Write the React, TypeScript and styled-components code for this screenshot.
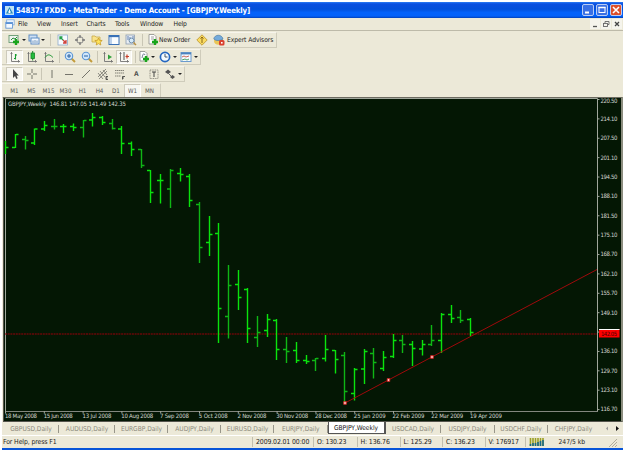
import React from "react";
import styled, { createGlobalStyle, css } from "styled-components";

const Global = createGlobalStyle`
  * { box-sizing: border-box; }
  body { margin: 0; background: #fff; font-family: "DejaVu Sans Condensed", "DejaVu Sans", sans-serif; font-size: 6.5px; color: #222; }
  svg { display: block; overflow: visible; }
`;

const Window = styled.div`
  width: 625px; height: 450px; padding: 2px 2px 0 2px; overflow: hidden;
  display: flex; flex-direction: column; background: #fff;
`;
const Body = styled.div`
  width: 621px; height: 446px; flex: none; display: flex; flex-direction: column; background: #ece9d8;
`;
const TitleBar = styled.header`
  height: 16px; display: flex; align-items: center; padding: 0 1px 0 3px; flex: none;
  background: linear-gradient(#2b7df5 0, #0a4fe0 12%, #0350da 45%, #0462fa 65%, #0462fa 88%, #0340b8 100%);
`;
const Title = styled.h1`
  margin: 0 auto 0 2px; color: #fff; white-space: pre;
  font: bold 7.8px "DejaVu Sans Condensed", "DejaVu Sans", sans-serif; letter-spacing: -0.15px;
`;
const WinButton = styled.span<{ $close?: boolean }>`
  width: 12px; height: 12px; margin-left: 2px; border: 1px solid #b9cdf5; border-radius: 2px;
  background: ${(p) => (p.$close ? "#dc4f2b" : "#3a70e4")};
`;
const MenuBar = styled.nav`
  height: 13px; display: flex; align-items: center; padding-left: 3px; border-bottom: 1px solid #bdbaa9; flex: none;
`;
const MenuItem = styled.span<{ $w: number }>`
  width: ${(p) => p.$w}px; white-space: nowrap; font-size: 6.7px; letter-spacing: -0.1px;
`;
const ChildButtons = styled.div`
  margin-left: auto; display: flex; gap: 1px; padding-right: 1px;
`;
const ChildButton = styled.span`
  width: 10px; height: 10px; background: #f5f4ec; color: #555;
`;
const Toolbars = styled.div`
  height: 66px; display: flex; flex-direction: column; align-items: flex-start; gap: 1px; padding-top: 1px; flex: none;
`;
const Toolbar = styled.div<{ $w: number; $h?: number }>`
  width: ${(p) => p.$w}px; height: ${(p) => p.$h ?? 16}px; display: flex; align-items: center; padding-left: 4px;
  border-right: 1px solid #cfccbb; border-bottom: 1px solid #cfccbb; border-top: 1px solid #f7f5ec;
`;
const Slot = styled.span<{ $w: number; $on?: boolean }>`
  width: ${(p) => p.$w}px; height: 14px; flex: none; display: flex; align-items: center; justify-content: center;
  white-space: nowrap;
  ${(p) => p.$on && css`background: #f8f7f1; border: 1px solid #cdcabb; border-right-color: #fff; border-bottom-color: #fff;`}
`;
const Label = styled.span<{ $w: number; $s?: number }>`
  width: ${(p) => p.$w}px; flex: none; white-space: nowrap; font-size: 6.7px; letter-spacing: ${(p) => p.$s ?? 0}px;
`;
const Rule = styled.span`
  width: 1px; height: 12px; background: #c9c6b5; flex: none;
`;
const Frames = styled.span`
  display: contents; font-size: 6.2px; color: #555;
`;
const Caret = styled.span`
  width: 0; height: 0; flex: none; border: 2px solid transparent; border-top-color: #222; border-bottom: 0; margin: 0 2px 0 1px;
`;
const ChartPane = styled.main`
  height: 325px; margin-left: 1px; width: 620px; flex: none; background: #041704;
  border-top: 1px solid #6c6b60; border-left: 1px solid #55554d; border-right: 2px solid #8b8d7e; border-bottom: 1px solid #55554d;
`;
const Tabs = styled.div`
  height: 14px; display: flex; align-items: stretch; padding-left: 1px; flex: none; color: #8b897c;
  border-bottom: 1px solid #fff;
`;
const Tab = styled.span<{ $w: number; $on?: boolean; $last?: boolean }>`
  width: ${(p) => p.$w}px; flex: none; display: flex; align-items: center; justify-content: center; white-space: nowrap;
  font-size: 6.6px; letter-spacing: -0.02px; position: relative;
  &::after { content: ""; width: ${(p) => (p.$on || p.$last ? 0 : 1)}px; height: 8px; background: #98968a; position: absolute; right: 0; }
  ${(p) => p.$on && css`height: 12px; color: #111; background: #fff; border: 1px solid #555; border-top: 0; border-right-width: 2px;`}
`;
const Arrows = styled.span`
  margin-left: auto; padding: 3px 4px 0 0;
`;
const Status = styled.footer`
  height: 12px; display: flex; align-items: center; padding-left: 1px; flex: none;
`;
const Cell = styled.span<{ $w: number; $first?: boolean }>`
  width: ${(p) => p.$w}px; height: 10px; flex: none; display: flex; align-items: center; white-space: nowrap;
  padding-left: ${(p) => (p.$first ? 0 : 3)}px; border-left: ${(p) => (p.$first ? 0 : 1)}px solid #c2bfaf;
  font-size: 6.9px; letter-spacing: -0.13px;
`;
const BottomEdge = styled.div`
  flex: 1; background: #0754d8; width: 621px;
`;

const Ico = ({ children, size = 12 }: { children: React.ReactNode; size?: number }) => (
  <svg width={size} height={size} viewBox="0 0 12 12" fill="none">{children}</svg>
);
const Plus = ({ x = 8, y = 8 }: { x?: number; y?: number }) => (
  <path d={`M${x - 3} ${y}h6M${x} ${y - 3}v6`} stroke="#19a51c" strokeWidth="2.4" />
);
const Page = ({ tint = "#fff" }: { tint?: string }) => (
  <path d="M2 .5h5l2 2v7.500H2z" fill={tint} stroke="#8c8c88" strokeWidth=".8" />
);
const NewChart = () => <Ico><rect x="1" y="1.500" width="9" height="7" fill="#eef5ee" stroke="#669970" strokeWidth=".9" /><path d="M3 6l2-2 2 1 2-2" stroke="#2d8b3c" /><Plus /></Ico>;
const Profiles = () => <Ico><rect x="1" y="1" width="8" height="6" fill="#cfe0f4" stroke="#5f8dc4" /><rect x="3" y="4" width="8" height="6" fill="#f3f8ff" stroke="#5f8dc4" /><path d="M5 9V6.500M7 9V6M9 9V6.500" stroke="#7599bd" /></Ico>;
const Market = () => <Ico><rect x="1" y="1" width="9.500" height="10" fill="#f7fbff" stroke="#8eaacb" strokeWidth=".8" /><path d="M3 3l3 3M3 5.500V3h2.500" stroke="#23a04a" strokeWidth="1.300" /><path d="M6 6l3 3M9 6v3H6" stroke="#d0423c" strokeWidth="1.300" /></Ico>;
const Target = () => <Ico><circle cx="6" cy="6" r="3.300" stroke="#888" /><path d="M6 1v3M6 8v3M1 6h3M8 6h3" stroke="#777" strokeWidth="1.300" /></Ico>;
const Navigator = () => <Ico><path d="M1 2h3l1 1h4v5H1z" fill="#f9e38a" stroke="#c9aa4a" strokeWidth=".8" /><path d="M7.500 4l1 2.300 2.700.2-2 1.800.6 2.700-2.300-1.400L5.200 11l.6-2.700-2-1.800 2.700-.2z" fill="#ffe45a" stroke="#c79b28" strokeWidth=".8" /></Ico>;
const Terminal = () => <Ico><rect x="1" y="1.500" width="10" height="9" fill="#fafdff" stroke="#3971b7" /><path d="M1 2.500h10" stroke="#3971b7" strokeWidth="1.300" /><path d="M3 3v7" stroke="#7fa5d6" /></Ico>;
const Tester = () => <Ico><rect x="1" y="1" width="8.500" height="9" fill="#e7edf3" stroke="#8c9caf" strokeWidth=".8" /><path d="M3 2v4M5 3v5M8 2v3" stroke="#6381b3" /><circle cx="6.500" cy="6.500" r="2.400" fill="#d5eaf8" stroke="#7491ae" /><path d="M8.500 8.500l2.500 2.500" stroke="#b99142" strokeWidth="1.500" /></Ico>;
const Order = () => <Ico><Page /><path d="M4 3h3M4 5h3" stroke="#888" strokeWidth=".8" /><Plus /></Ico>;
const Editor = () => <Ico><path d="M6 .8L11.200 6 6 11.200.8 6z" fill="#fadb62" stroke="#b9932c" strokeWidth=".8" /><path d="M6 3v6M4.500 4.500L6 3l1.500 1.500" stroke="#8a6815" /></Ico>;
const Expert = () => <Ico><ellipse cx="5.500" cy="7" rx="4.500" ry="3.800" fill="#e9c558" /><path d="M.8 5C1.500 0 9 0 10 5 7 7 3 7 .8 5z" fill="#75abdb" stroke="#4e7ba5" strokeWidth=".7" /><rect x="6" y="6" width="5.500" height="5.500" rx="1.500" fill="#d9412e" /><rect x="8" y="8" width="1.600" height="1.600" fill="#fff" /></Ico>;
const Axes = () => <path d="M2.500 1v9.500H11M1.500 2.500h2M9.500 9v2.500" stroke="#747474" strokeWidth=".9" />;
const BarIcon = () => <Ico><Axes /><path d="M6.500 3v5.500M5 7.500h1.500M6.500 4H8" stroke="#139b2d" strokeWidth="1.100" /></Ico>;
const CandleIcon = () => <Ico><Axes /><rect x="5" y="2" width="3.500" height="5.500" fill="#24bc3c" stroke="#148425" strokeWidth=".8" /><path d="M6.700 0v2M6.700 7.500v2" stroke="#148425" /></Ico>;
const LineIcon = () => <Ico><Axes /><path d="M2 6.500c3-4 5-3 8 0" stroke="#2a9b3a" /></Ico>;
const Zoom = ({ plus }: { plus?: boolean }) => <Ico><path d="M7.500 7.500l3.500 3.500" stroke="#c39b3b" strokeWidth="2" /><circle cx="5" cy="5" r="3.700" fill="#cfe6fb" stroke="#5a94d3" strokeWidth="1.100" /><path d={plus ? "M3 5h4M5 3v4" : "M3 5h4"} stroke="#285f9e" /></Ico>;
const ScrollIcon = () => <Ico><Axes /><path d="M6 3.500l4 2.500-4 2.500z" fill="#31a13c" /></Ico>;
const ShiftIcon = () => <Ico><Axes /><path d="M6 1v8" stroke="#555" /><path d="M11 5.500H7.500M9 3.500v4" stroke="#c83d29" strokeWidth="1.200" /></Ico>;
const Indicators = () => <Ico><Page /><path d="M4 7c1-5 2-5 3-3" stroke="#567" strokeWidth=".8" /><Plus /></Ico>;
const Clock = () => <Ico><circle cx="6" cy="6" r="4.600" fill="#f4faff" stroke="#2567c0" strokeWidth="1.700" /><path d="M6 3v3h2.500" stroke="#456" /></Ico>;
const Template = () => <Ico><rect x="1" y="1.500" width="10" height="9" fill="#f5faff" stroke="#6c9bce" /><path d="M1 2.500h10" stroke="#4b83be" strokeWidth="1.800" /><path d="M2 6l2-1 2 1 3-1" stroke="#c65745" strokeWidth=".9" /><path d="M2 9l3-1 2 1 2-1" stroke="#3a9b52" strokeWidth=".9" /></Ico>;
const Pointer = () => <Ico><path d="M4 1v9l2-2 1.300 3 1.400-.7L7.500 7.500h2.300z" fill="#444" /></Ico>;
const Stroke = ({ d }: { d: string }) => <Ico><path d={d} stroke="#68675f" strokeWidth=".9" /></Ico>;
const Channel = () => <Ico><path d="M1 9l8-8M2 11l8-8M3 3l5 6M1 5l5 6M6 2l4 5" stroke="#66655f" strokeWidth=".7" /><path d="M11 8.500H9v3h2M9 10h1.500" stroke="#333" strokeWidth=".8" /></Ico>;
const Fibo = () => <Ico><path d="M1 2.500h9M1 5h9M1 8h6" stroke="#77756c" strokeWidth=".9" strokeDasharray="1.500 .5" /><path d="M8.500 11.500V8.500h2.500M8.500 10H10" stroke="#333" strokeWidth=".8" /></Ico>;
const TextBox = () => <Ico><rect x="2" y="2" width="8" height="8.500" stroke="#77756c" strokeWidth=".8" strokeDasharray="1 .7" /><path d="M4 4h4M6 4v5" stroke="#444" /></Ico>;
const Shapes = () => <Ico><path d="M1 4l3-2.500L7 4 4 6z" fill="#555" /><path d="M4 5l3 3" stroke="#666" /><path d="M6 9l2.500-2L11 9l-2.500 2z" fill="#555" /></Ico>;

// Each row holds x, open, high, low and close in pane coordinates.
const bars: number[][] = [
  [5, 147.5, 141, 154, 147.5], [15, 147.5, 134, 148, 134.5], [25, 139.5, 136, 149.5, 140.5], [34, 143, 128.5, 145, 129],
  [44, 129, 121, 131, 125.5], [54, 126.5, 119, 129.5, 126.5], [63, 126.5, 124, 133, 126.5], [73, 126.5, 123.5, 131, 127.5],
  [83, 127.5, 120, 137.5, 120.5], [92, 120, 113, 126.5, 117.5], [102, 117.5, 116, 125, 122.5], [112, 123.5, 119, 129.5, 128.5],
  [121, 129, 126, 154, 143.5], [131, 143.5, 141.5, 156, 149.5], [141, 149.5, 149, 168, 165.5], [150, 170.5, 170, 203, 192.5],
  [160, 180.5, 174, 203.5, 180.5], [170, 189, 169, 208, 170.5], [180, 173.5, 168, 181.5, 174.5], [189, 176.5, 174, 207, 200.5],
  [199, 204.5, 202, 263, 247.5], [209, 242.5, 216, 256, 234.5], [218, 233.5, 223, 343, 308.5], [228, 316.5, 265, 338.5, 285.5],
  [238, 284.5, 270, 310, 297.5], [247, 289.5, 288, 343, 328.5], [257, 337.5, 316, 347, 332.5], [267, 330.5, 314, 337, 319.5],
  [276, 320.5, 319, 360, 349.5], [286, 349.5, 337, 363, 351.5], [296, 350.5, 342, 363, 360.5], [306, 360.5, 355, 364, 361.5],
  [315, 360.5, 358, 371, 358.5], [325, 358.5, 335, 361.5, 349.5], [335, 350.5, 350, 373.5, 359.5], [344, 355.5, 352, 403, 391.5],
  [354, 393.5, 368, 400.5, 369.5], [364, 369, 349, 384, 351.5], [373, 353.5, 348, 378.5, 362.5], [383, 368.5, 351, 371, 357.5],
  [393, 356.5, 334, 358, 340.5], [402, 340.5, 335, 353, 344.5], [412, 344.5, 341, 366, 348.5], [422, 349, 340, 355.5, 344.5],
  [431, 344.5, 325, 346, 340.5], [441, 340.5, 313, 353, 314.5], [451, 314.5, 305, 323, 318.5], [460, 317.5, 310, 323, 320.5],
  [470, 319.5, 318, 336, 332.5],
];
const prices = ["220.50", "214.10", "207.50", "201.10", "194.50", "188.10", "181.50", "175.10", "168.70", "162.10", "155.70", "149.10", "", "136.10", "129.70", "123.10", "116.70"];
const dates = ["18 May 2008", "15 Jun 2008", "13 Jul 2008", "10 Aug 2008", "7 Sep 2008", "5 Oct 2008", "2 Nov 2008", "30 Nov 2008", "28 Dec 2008", "25 Jan 2009", "22 Feb 2009", "22 Mar 2009", "19 Apr 2009"];

const PlotText = styled.text`
  font: 6px "DejaVu Sans Condensed", "DejaVu Sans", sans-serif; fill: #d2d6d0;
`;

const Chart = () => (
  <svg width="617" height="323" viewBox="4 98 617 323" fill="none">
    <path d="M5.500 411V98.500H597.500V411.500" stroke="#a0a79c" />
    <path d="M5 411.500H598" stroke="#83877f" />
    <path d="M5 334H597" stroke="#98000a" strokeWidth="1.200" strokeDasharray="2 .7" />
    {bars.map(([x, o, h, l, c], i) => (
      <path key={i} d={`M${x + 0.5} ${h}V${l}M${i ? x - 3 : x} ${o}H${x}M${x + 1} ${c}h2.500`} stroke={i % 3 === 2 ? "#0fb615" : "#0ae30d"} strokeWidth="1.400" />
    ))}
    <path d="M345 403L597 269.500" stroke="#b0080c" strokeWidth=".9" />
    {[[345, 403], [388.5, 380], [432, 357]].map(([x, y]) => (
      <rect key={x} x={x - 1.2} y={y - 1.2} width="2.400" height="2.400" fill="#fff" stroke="#e22" strokeWidth=".9" />
    ))}
    <PlotText x="8" y="105.500" textLength="118" xmlSpace="preserve">GBPJPY,Weekly  146.81 147.05 141.49 142.35</PlotText>
    {prices.map((p, i) => (
      <g key={i}>
        <path d={`M598 ${99.5 + i * 19.38}h1.500`} stroke="#a0a79c" />
        {p && <PlotText x="600.500" y={i ? 101.4 + i * 19.38 : 102.6} textLength="17">{p}</PlotText>}
      </g>
    ))}
    <rect x="599" y="329" width="20.500" height="8.500" fill="#f00" />
    <path d="M599 329.500h20.500" stroke="#fff" />
    <text x="601" y="335.800" textLength="16" fontSize="5.800" fill="#400">142.05</text>
    {dates.map((d, i) => (
      <g key={d}>
        <path d={`M${5.5 + i * 38.8} 411v2.500`} stroke="#a0a79c" />
        <PlotText x={5 + i * 38.75} y="418.400" textLength={d.length === 11 ? (i === 1 || i === 2 ? 29 : 32) : 29}>{d}</PlotText>
      </g>
    ))}
  </svg>
);

const tabs: [string, number][] = [["GBPUSD,Daily", 56], ["AUDUSD,Daily", 56], ["EURGBP,Daily", 53], ["AUDJPY,Daily", 53], ["EURUSD,Daily", 53], ["EURJPY,Daily", 53.5], ["GBPJPY,Weekly", 58], ["USDCAD,Daily", 55], ["USDJPY,Daily", 54], ["USDCHF,Daily", 53], ["CHFJPY,Daily", 52]];
const menus: [string, number][] = [["File", 19], ["View", 24], ["Insert", 25.5], ["Charts", 28.5], ["Tools", 25], ["Window", 33.5], ["Help", 20]];
const periods: [string, number][] = [["M1", 17], ["M5", 17], ["M15", 17], ["M30", 17], ["H1", 17], ["H4", 17], ["D1", 16], ["W1", 17], ["MN", 17]];

export default function App() {
  return (
    <Window>
      <Global />
      <Body>
        <TitleBar>
          <svg width="9" height="9" viewBox="0 0 9 9"><rect width="9" height="9" fill="#bfe2f4" /><path d="M4.500 1L8 7.500H1z" fill="#2688bd" /><path d="M4.500 3.500V7M3 6h3" stroke="#fff" /></svg>
          <Title>54837: FXDD - MetaTrader - Demo Account - [GBPJPY,Weekly]</Title>
          <WinButton><svg width="10" height="10"><path d="M2 7.500h4" stroke="#fff" strokeWidth="2" /></svg></WinButton>
          <WinButton><svg width="10" height="10" fill="none"><rect x="2" y="2.500" width="6" height="5" stroke="#fff" /><path d="M1.500 2.500h7" stroke="#fff" strokeWidth="1.500" /></svg></WinButton>
          <WinButton $close><svg width="10" height="10"><path d="M2 2l6 6M8 2L2 8" stroke="#fff" strokeWidth="1.600" /></svg></WinButton>
        </TitleBar>
        <MenuBar>
          <Label $w={13}><svg width="10" height="10" viewBox="0 0 12 12" fill="none"><rect x="2" y="1" width="9" height="6" fill="#f5faff" stroke="#7ba9df" /><rect x="1" y="4" width="8" height="7" fill="#f5faff" stroke="#5a91d5" /><path d="M1 5h8" stroke="#5a91d5" strokeWidth="2" /></svg></Label>
          {menus.map(([m, w]) => <MenuItem key={m} $w={w}>{m}</MenuItem>)}
          <ChildButtons>
            <ChildButton><svg width="10" height="10"><path d="M3 7.500h4" stroke="#555" strokeWidth="1.300" /></svg></ChildButton>
            <ChildButton><svg width="10" height="10" fill="none" stroke="#666" strokeWidth=".9"><rect x="2.500" y="4.500" width="4" height="3" /><path d="M4 4V2.500h4v3H7" /></svg></ChildButton>
            <ChildButton><svg width="10" height="10"><path d="M3 3l4 4M7 3L3 7" stroke="#444" strokeWidth="1.300" /></svg></ChildButton>
          </ChildButtons>
        </MenuBar>
        <Toolbars>
          <Toolbar $w={275}>
            <Slot $w={15}><NewChart /></Slot><Caret /><Slot $w={12}><Profiles /></Slot><Caret />
            <Slot $w={7}><Rule /></Slot>
            <Slot $w={17}><Market /></Slot><Slot $w={17}><Target /></Slot><Slot $w={17}><Navigator /></Slot><Slot $w={17}><Terminal /></Slot><Slot $w={17}><Tester /></Slot>
            <Slot $w={7}><Rule /></Slot>
            <Slot $w={13}><Order /></Slot><Label $w={35} $s={-0.12}>New Order</Label><Slot $w={16}><Editor /></Slot><Slot $w={17}><Expert /></Slot><Label $w={47} $s={-0.05}>Expert Advisors</Label>
          </Toolbar>
          <Toolbar $w={199}>
            <Slot $w={17} $on><BarIcon /></Slot><Slot $w={17}><CandleIcon /></Slot><Slot $w={17}><LineIcon /></Slot><Slot $w={4}><Rule /></Slot>
            <Slot $w={17}><Zoom plus /></Slot><Slot $w={17}><Zoom /></Slot><Slot $w={4}><Rule /></Slot>
            <Slot $w={17}><ScrollIcon /></Slot><Slot $w={16} $on><ShiftIcon /></Slot><Slot $w={6}><Rule /></Slot>
            <Slot $w={12}><Indicators /></Slot><Caret /><Slot $w={15}><Clock /></Slot><Caret /><Slot $w={14}><Template /></Slot><Caret />
          </Toolbar>
          <Toolbar $w={183}>
            <Slot $w={17} $on><Pointer /></Slot><Slot $w={17}><Stroke d="M6 1v4M6 7v4M1 6h4M7 6h4" /></Slot><Slot $w={3}><Rule /></Slot>
            <Slot $w={17}><Stroke d="M6 2v8" /></Slot><Slot $w={17}><Stroke d="M2 6.500h8" /></Slot><Slot $w={17}><Stroke d="M2 10l8-8" /></Slot>
            <Slot $w={17}><Channel /></Slot><Slot $w={17}><Fibo /></Slot><Frames><Slot $w={17}><Label as="b" $w={5}>A</Label></Slot></Frames><Slot $w={17}><TextBox /></Slot><Slot $w={15}><Shapes /></Slot><Caret />
          </Toolbar>
          <Toolbar $w={159} $h={15}>
            <Frames>{periods.map(([p, w]) => <Slot key={p} $w={w} $on={p === "W1"}>{p}</Slot>)}</Frames>
          </Toolbar>
        </Toolbars>
        <ChartPane><Chart /></ChartPane>
        <Tabs>
          {tabs.map(([t, w]) => <Tab key={t} $w={w} $on={t === "GBPJPY,Weekly"} $last={t === "CHFJPY,Daily"}>{t}</Tab>)}
          <Arrows><svg width="16" height="7"><path d="M5 1.500v4L3 3.500z" fill="#999" /><path d="M13 1v5l3-2.500z" fill="#111" /></svg></Arrows>
        </Tabs>
        <Status>
          <Cell $w={249} $first>For Help, press F1</Cell>
          <Cell $w={61}>2009.02.01 00:00</Cell><Cell $w={43.5}>O: 130.23</Cell><Cell $w={43}>H: 136.76</Cell><Cell $w={42.5}>L: 125.29</Cell><Cell $w={42.5}>C: 136.23</Cell><Cell $w={40}>V: 176917</Cell>
          <Cell $w={34}><svg width="16" height="8"><path d="M1.500 0v8M4 0v8M6.500 0v8M9 0v8M11.500 0v8M14 0v8" stroke="#9b9f22" strokeWidth="1.600" /><path d="M1.500 6v2M4 5v3M6.500 5v3M9 4v4M11.500 3v5M14 2v6" stroke="#176889" strokeWidth="1.600" /></svg></Cell>
          <Label $w={41}>247/5 kb</Label>
          <svg width="18" height="10"><path d="M9 10l8-8M12 10l5-5M15 10l2-2" stroke="#b1ad9b" /></svg>
        </Status>
      </Body>
      <BottomEdge />
    </Window>
  );
}
